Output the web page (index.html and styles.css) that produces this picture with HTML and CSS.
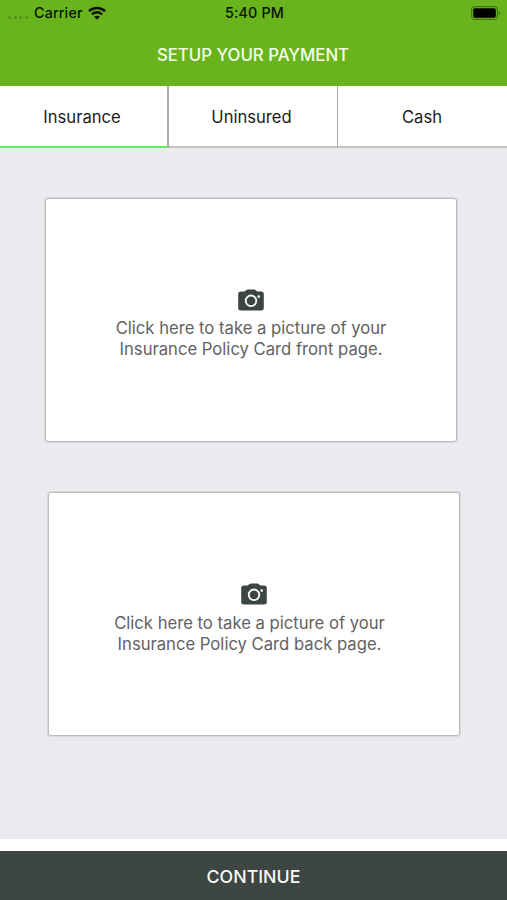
FILE: index.html
```html
<!DOCTYPE html>
<html lang="en">
<head>
    <meta charset="UTF-8">
    <meta name="viewport" content="width=device-width, initial-scale=1.0">
    <title>Setup Your Payment</title>
    <link rel="stylesheet" href="styles.css">
</head>
<body>
    <header class="header">
        <div class="status-bar">
            <div class="status-left">
                <span class="signal"><i></i><i></i><i></i><i></i></span>
                <span class="carrier">Carrier</span>
                <svg class="wifi" viewBox="0 0 18 14" width="18" height="14">
                    <g fill="none" stroke="#071200" stroke-width="2.5">
                        <path d="M0.9 5.2C5.4 0.8 12.6 0.8 17.1 5.2"/>
                        <path d="M3.9 8.4C6.8 5.6 11.2 5.6 14.1 8.4"/>
                    </g>
                    <path d="M9 13.6L6 10.8C7.7 9.3 10.3 9.3 12 10.8Z" fill="#071200"/>
                </svg>
            </div>
            <div class="status-time">5:40 PM</div>
            <div class="status-right">
                <svg viewBox="0 0 30 14" width="30" height="14">
                    <rect x="0.6" y="0.6" width="25.8" height="12.8" rx="3.4" fill="none" stroke="#3f730d" stroke-width="1.1"/>
                    <rect x="2.2" y="2.2" width="22.6" height="9.6" rx="1.8" fill="#000"/>
                    <path d="M27.8 4.8Q29.3 5.6 29.3 7T27.8 9.2Z" fill="#3f730d"/>
                </svg>
            </div>
        </div>
        <h1 class="title">SETUP YOUR PAYMENT</h1>
    </header>

    <nav class="tabs">
        <a class="tab active">Insurance</a>
        <a class="tab">Uninsured</a>
        <a class="tab">Cash</a>
    </nav>

    <main class="content">
        <div class="card card-front">
            <svg class="camera" viewBox="0 0 26 22" width="26" height="22">
                <path d="M3 2.5H6.6L8.5 0.9Q9 0.4 9.8 0.4H16.2Q17 0.4 17.5 0.9L19.4 2.5H23Q25.8 2.5 25.8 5V19Q25.8 21.5 23 21.5H3Q0.2 21.5 0.2 19V5Q0.2 2.5 3 2.5Z" fill="#3c4543"/>
                <circle cx="13" cy="11.8" r="5.3" fill="none" stroke="#fff" stroke-width="1.8"/>
                <circle cx="20.7" cy="7.6" r="1.3" fill="#fff"/>
            </svg>
            <p class="card-text">Click here to take a picture of your<br>Insurance Policy Card front page.</p>
        </div>
        <div class="card card-back">
            <svg class="camera" viewBox="0 0 26 22" width="26" height="22">
                <path d="M3 2.5H6.6L8.5 0.9Q9 0.4 9.8 0.4H16.2Q17 0.4 17.5 0.9L19.4 2.5H23Q25.8 2.5 25.8 5V19Q25.8 21.5 23 21.5H3Q0.2 21.5 0.2 19V5Q0.2 2.5 3 2.5Z" fill="#3c4543"/>
                <circle cx="13" cy="11.8" r="5.3" fill="none" stroke="#fff" stroke-width="1.8"/>
                <circle cx="20.7" cy="7.6" r="1.3" fill="#fff"/>
            </svg>
            <p class="card-text">Click here to take a picture of your<br>Insurance Policy Card back page.</p>
        </div>
    </main>

    <button class="continue-button">CONTINUE</button>
</body>
</html>
```

FILE: styles.css
```css
* {
    box-sizing: border-box;
}
body {
    margin: 0;
    height: 900px;
    display: flex;
    flex-direction: column;
    font-family: Inter, "Liberation Sans", sans-serif;
    background-color: #fff;
}
.header {
    height: 86px;
    background-color: #69b41c;
}
.status-bar {
    display: grid;
    grid-template-columns: 1fr auto 1fr;
    align-items: center;
    height: 25px;
    padding: 0 6px 0 8px;
    color: #071200;
    font-size: 14.3px;
    font-weight: 500;
}
.status-left {
    display: flex;
    align-items: center;
}
.carrier {
    letter-spacing: 0.15px;
}
.signal {
    display: flex;
    gap: 2.5px;
    width: 26px;
    padding-top: 9px;
}
.signal i {
    width: 3px;
    height: 3px;
    border-radius: 50%;
    background-color: #529015;
}
.wifi {
    margin-left: 5px;
}
.status-time {
    letter-spacing: 0.2px;
}
.status-right {
    display: flex;
    justify-content: flex-end;
}
.title {
    margin: 19px 0 0;
    padding-right: 1px;
    color: #f4ffe9;
    font-size: 16.8px;
    font-weight: 500;
    line-height: 22px;
    text-align: center;
}
.tabs {
    display: flex;
    height: 62px;
}
.tab {
    width: 169px;
    padding-right: 3px;
    border-right: 1px solid #aaa;
    border-bottom: 2px solid #c2c2c4;
    color: #1c1c1c;
    font-size: 16.6px;
    line-height: 62px;
    text-align: center;
}
.tab.active {
    border-right: 2px solid #aaa;
    border-bottom-color: #62ee5c;
}
.tab:last-child {
    padding-right: 1px;
    border-right: none;
}
.content {
    height: 691px;
    padding: 49px 45px 0;
    background-color: #ebeaee;
}
.card {
    display: flex;
    flex-direction: column;
    align-items: center;
    width: 412px;
    height: 244px;
    padding-top: 90px;
    border: 1px solid #bbbbbd;
    border-radius: 3px;
    background-color: #fff;
    box-shadow: 0 0 0 1px #d9d9dc;
}
.card-front {
    margin-top: 1px;
}
.card-back {
    margin: 50px 0 0 3px;
}
.card-text {
    margin: 7px 0 0;
    color: #626262;
    font-size: 16.65px;
    line-height: 20.6px;
    text-align: center;
}
.card-back .card-text {
    margin-top: 8px;
    padding-right: 9px;
}
.continue-button {
    height: 49px;
    margin-top: 12px;
    padding: 1px 0 0;
    border: none;
    background-color: #3d4642;
    color: #f6faf8;
    font-family: inherit;
    font-size: 17.8px;
    font-weight: 500;
}
```
